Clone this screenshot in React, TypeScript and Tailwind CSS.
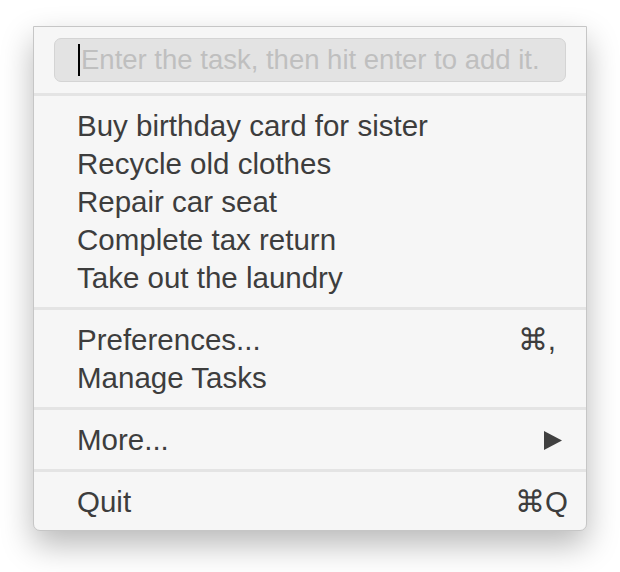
import React from 'react'

const tasks = [
  'Buy birthday card for sister',
  'Recycle old clothes',
  'Repair car seat',
  'Complete tax return',
  'Take out the laundry',
]

function Item({ label, right }: { label: string; right?: React.ReactNode }) {
  return (
    <div className="flex h-[38px] items-center justify-between pl-[43px] pr-[18px] leading-none">
      <span>{label}</span>
      {right}
    </div>
  )
}

function Sep() {
  return <div className="h-[3px] bg-[#e4e4e4]" />
}

export default function App() {
  return (
    <div className="h-[572px] w-[620px] bg-white pl-[33px] pt-[26px]">
      <div
        className="w-[554px] rounded-b-[7px] border border-[#c6c6c6] bg-[#f6f6f6] text-[29.5px] text-[#3d3d3d] shadow-[0_14px_32px_rgba(0,0,0,0.28)]"
        style={{ fontFamily: '"Liberation Sans", Arial, sans-serif' }}
      >
        <div className="px-[20px] pb-[11px] pt-[11px]">
          <div className="flex h-[44px] items-center rounded-[7px] border border-[#d4d4d4] bg-[#e3e3e3] pl-[23px]">
            <div className="mr-[1px] h-[32px] w-[2px] bg-black" />
            <span className="text-[27.5px] leading-none text-[#bfbfbf]">Enter the task, then hit enter to add it.</span>
          </div>
        </div>
        <Sep />
        <div className="pb-[10px] pt-[11px]">
          {tasks.map((t) => (
            <Item key={t} label={t} />
          ))}
        </div>
        <Sep />
        <div className="pb-[10px] pt-[11px]">
          <Item label="Preferences..." right={<span className="pr-[12px]">⌘,</span>} />
          <Item label="Manage Tasks" />
        </div>
        <Sep />
        <div className="pb-[10px] pt-[11px]">
          <Item
            label="More..."
            right={
              <svg width="18" height="19" viewBox="0 0 18 19" className="mr-[6px]">
                <polygon points="0,0 18,9.5 0,19" fill="#404040" />
              </svg>
            }
          />
        </div>
        <Sep />
        <div className="pb-[9px] pt-[11px]">
          <Item label="Quit" right={<span>⌘Q</span>} />
        </div>
      </div>
    </div>
  )
}
